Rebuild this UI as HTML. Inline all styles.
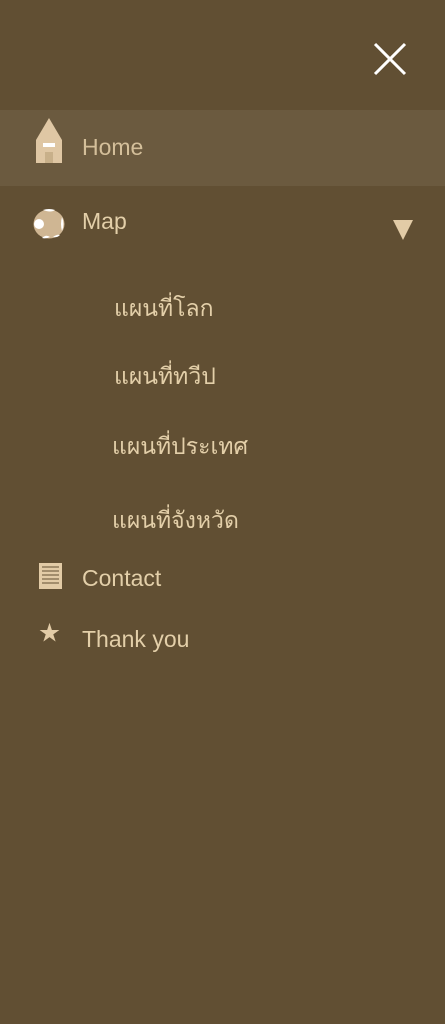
<!DOCTYPE html>
<html><head><meta charset="utf-8"><style>
body{margin:0;width:445px;height:1024px;background:#614f33;position:relative;overflow:hidden;font-family:"Liberation Sans","Noto Sans CJK SC",sans-serif;color:#e3cfa9}
.a{position:absolute;white-space:nowrap}
.t{font-size:23px}
.th{font-size:23px;font-family:"DejaVu Sans",sans-serif}
</style></head><body>
<svg class="a" style="left:373px;top:42px" width="34" height="34"><path d="M2 2L32 32M32 2L2 32" stroke="#fff" stroke-width="3"/></svg>
<div class="a" style="left:0;top:110px;width:445px;height:76px;background:#6b5a3f"></div>
<svg class="a" style="left:36px;top:118px" width="27" height="45"><path d="M13 0L26 22V45H0V22Z" fill="#dfc7a4"/><rect x="7" y="25" width="12" height="4" fill="#fff"/><rect x="9" y="34" width="8" height="11" fill="#c8b08a"/></svg>
<div class="a t" style="left:82px;top:134px;color:#d4bf9a">Home</div>
<svg class="a" style="left:33px;top:209px" width="32" height="30"><ellipse cx="16" cy="15" rx="15.5" ry="14.5" fill="#cfb693"/><circle cx="6" cy="15" r="5" fill="#fff"/><path d="M10 1Q16 -1 22 1 18 4 10 1Z" fill="#fff"/><path d="M9 29Q13 25 17 28 13 30 9 29Z" fill="#fff"/><path d="M20 28Q24 25 27 26 24 29 20 28Z" fill="#fff"/><path d="M29 8Q27 15 29 22 32 15 29 8Z" fill="#fff"/></svg>
<div class="a t" style="left:82px;top:208px">Map</div>
<svg class="a" style="left:393px;top:220px" width="20" height="20"><path d="M0 0H20L10 20Z" fill="#e2cba6"/></svg>
<div class="a th" style="left:114px;top:291px">แผนที่โลก</div>
<div class="a th" style="left:114px;top:359px">แผนที่ทวีป</div>
<div class="a th" style="left:112px;top:429px">แผนที่ประเทศ</div>
<div class="a th" style="left:112px;top:503px">แผนที่จังหวัด</div>
<svg class="a" style="left:39px;top:563px" width="23" height="26"><rect width="23" height="26" fill="#e2cba6"/><path d="M3 4H20M3 8H20M3 12H20M3 16H20M3 20H20" stroke="#614f33" stroke-width="1"/></svg>
<div class="a t" style="left:82px;top:565px">Contact</div>
<div class="a" style="left:39px;top:622px;font-size:21px;line-height:24px;color:#e2cba6">★</div>
<div class="a t" style="left:82px;top:626px">Thank you</div>
</body></html>
